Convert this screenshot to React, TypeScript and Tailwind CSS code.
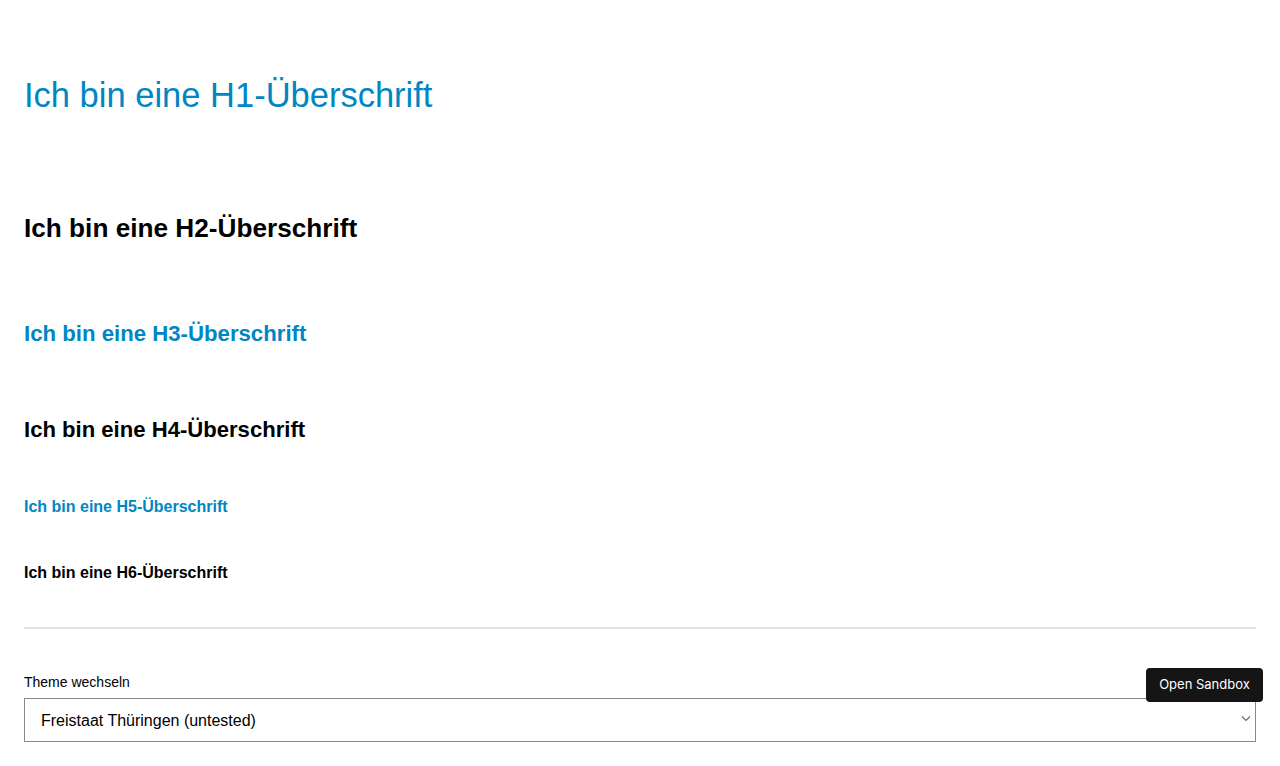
import React from "react";

export default function App() {
  return (
    <div className="min-h-[766px] bg-white px-6 pt-[75px] font-['Liberation_Sans',Arial,sans-serif] text-black">
      <h1 className="text-[34.5px] leading-[40px] font-normal text-[#0086c3]">Ich bin eine H1-Überschrift</h1>
      <h2 className="mt-[97px] text-[26.2px] leading-[32px] font-bold">Ich bin eine H2-Überschrift</h2>
      <h3 className="mt-[76px] text-[22.2px] leading-[28px] font-bold text-[#0086c3]">Ich bin eine H3-Überschrift</h3>
      <h4 className="mt-[68px] text-[22.1px] leading-[28px] font-bold">Ich bin eine H4-Überschrift</h4>
      <h5 className="mt-[53px] text-[16px] leading-[20px] font-bold text-[#0086c3]">Ich bin eine H5-Überschrift</h5>
      <h6 className="mt-[46px] text-[16px] leading-[20px] font-bold">Ich bin eine H6-Überschrift</h6>
      <hr className="mt-[44px] border-0 h-[2px] bg-[#e3e3e3]" />
      <label className="mt-[45px] block text-[14px] leading-[16px]">Theme wechseln</label>
      <div className="relative mt-2">
        <select className="block h-[44px] w-full appearance-none border border-[#8a8a8a] bg-white pl-4 pt-[2px] text-[16px] text-black outline-none">
          <option>Freistaat Thüringen (untested)</option>
        </select>
        <svg className="pointer-events-none absolute right-[5px] top-[17px]" width="10" height="7" viewBox="0 0 10 7" fill="none">
          <path d="M1 1.5 L5 5.5 L9 1.5" stroke="#6b6b6b" strokeWidth="1.2" />
        </svg>
      </div>
      <button className="fixed left-[1146px] top-[668px] h-[34px] w-[117px] rounded-[4px] bg-[#151515] font-['Inter',sans-serif] text-[13px] text-white">
        Open Sandbox
      </button>
    </div>
  );
}
